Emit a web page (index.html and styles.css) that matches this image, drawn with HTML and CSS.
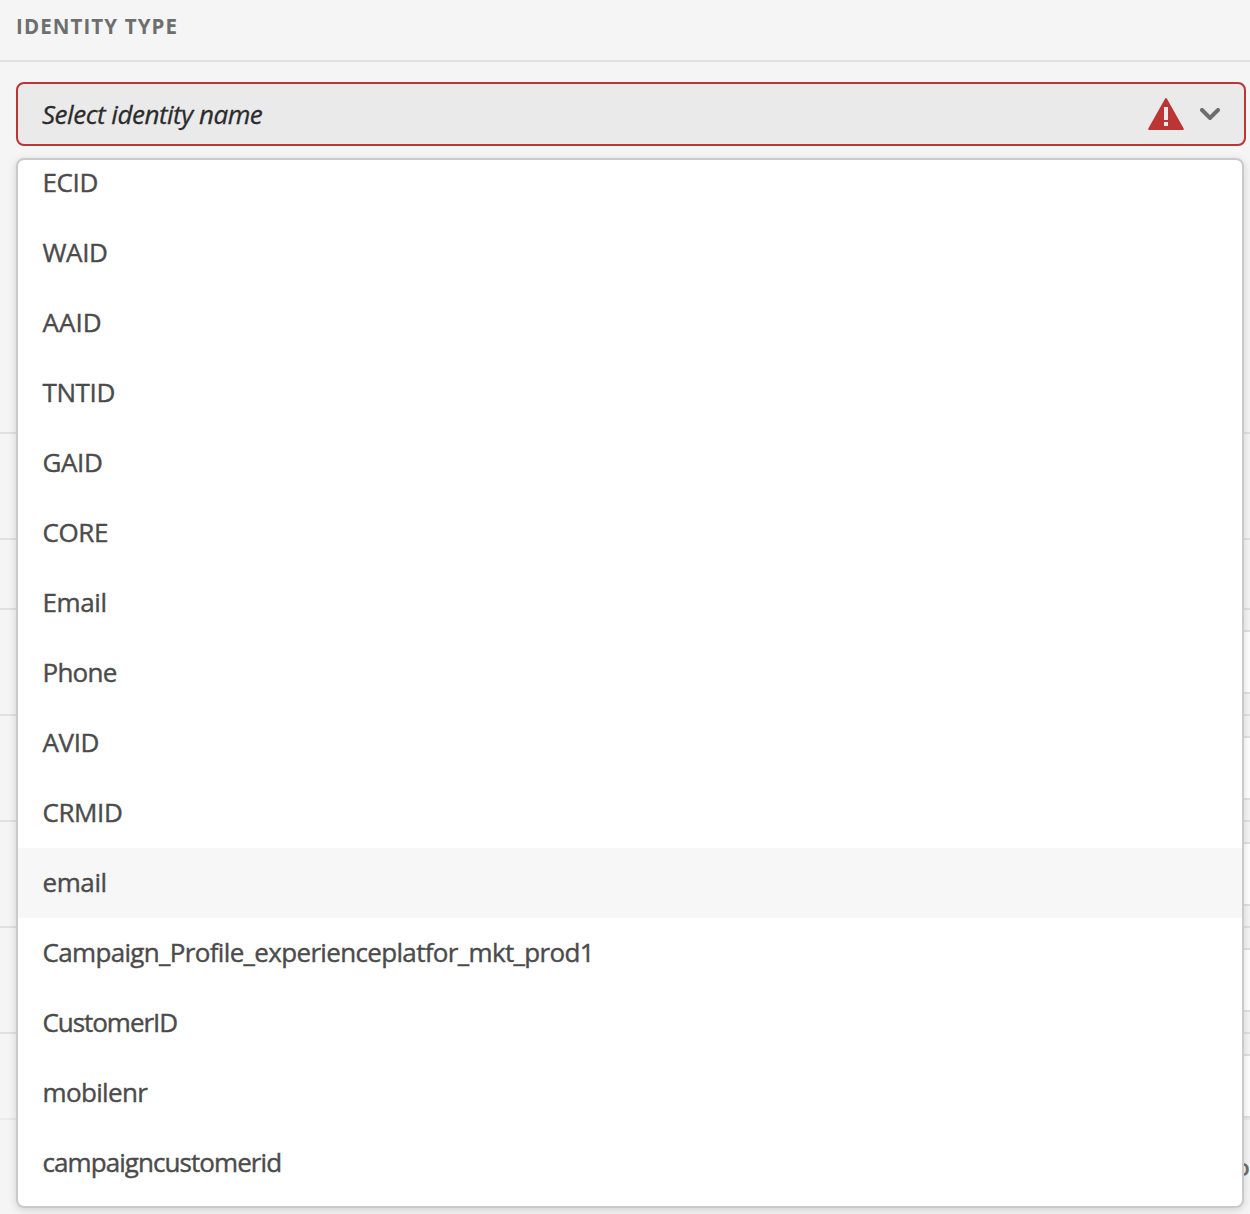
FILE: index.html
```
<!DOCTYPE html>
<html lang="en">
<head>
<meta charset="utf-8">
<title>Identity type</title>
<link rel="stylesheet" href="styles.css">
</head>
<body>
<main class="panel">
  <header class="panel-header">Identity type</header>

  <div class="picker-wrap">
    <button class="picker" type="button">
      <span class="picker-label">Select identity name</span>
      <svg class="icon-alert" viewBox="0 0 36 32" aria-hidden="true">
        <path fill="#bb3534" d="M17.2.6a1 1 0 0 1 1.6 0L35.7 30.5a1 1 0 0 1-.9 1.5H1.2a1 1 0 0 1-.9-1.5z"/>
        <path fill="#eaeaea" d="M16 9h4v13h-4zM16 24h4v4h-4z"/>
      </svg>
      <svg class="icon-chevron" viewBox="0 0 20 12" aria-hidden="true">
        <path d="M2 2l8 8 8-8" fill="none" stroke="#6e6e6e" stroke-width="4" stroke-linecap="round" stroke-linejoin="miter"/>
      </svg>
    </button>
    <ul class="menu">
      <li class="item snug">ECID</li>
      <li class="item snug">WAID</li>
      <li class="item">AAID</li>
      <li class="item snug">TNTID</li>
      <li class="item snug">GAID</li>
      <li class="item snug">CORE</li>
      <li class="item snug">Email</li>
      <li class="item close">Phone</li>
      <li class="item snug">AVID</li>
      <li class="item snug">CRMID</li>
      <li class="item snug is-hovered">email</li>
      <li class="item tight">Campaign_Profile_experienceplatfor_mkt_prod1</li>
      <li class="item tightest">CustomerID</li>
      <li class="item tight">mobilenr</li>
      <li class="item tighter">campaigncustomerid</li>
    </ul>
  </div>

  <div class="rows">
    <div class="row first"></div>
    <div class="row"></div>
    <div class="row short"></div>
    <div class="row"><div class="field"></div></div>
    <div class="row"><div class="field"></div></div>
    <div class="row"><div class="field"></div></div>
    <div class="row"><div class="field"></div></div>
    <div class="row last"><div class="field"></div></div>
  </div>
  <footer class="panel-footer">o</footer>
</main>
</body>
</html>
```
FILE: styles.css
```
* {
  box-sizing: border-box;
}

body {
  margin: 0;
  background: #f5f5f5;
  color: #4b4b4b;
  font-family: "Open Sans", "Noto Sans", sans-serif;
  font-size: 26px;
}

.panel {
  height: 1214px;
  overflow: hidden;
}

.panel-header {
  height: 62px;
  padding: 11px 17px 0 16px;
  border-bottom: 2px solid #e1e1e1;
  color: #6e6e6e;
  font-size: 20.5px;
  line-height: 30px;
  font-weight: 700;
  letter-spacing: 1.1px;
  text-transform: uppercase;
}

.picker-wrap {
  position: relative;
  height: 84px;
  padding: 20px 4px 0 16px;
}

.picker {
  display: flex;
  align-items: center;
  width: 100%;
  height: 64px;
  padding: 0 24px;
  border: 2px solid #bb3534;
  border-radius: 8px;
  background: #eaeaea;
  color: #2c2c2c;
  font: italic 26px "Open Sans", "Noto Sans", sans-serif;
  text-align: left;
}

.picker-label {
  flex: 1;
  letter-spacing: -0.48px;
  -webkit-text-stroke: 0.3px currentColor;
}

.icon-alert {
  width: 36px;
  height: 32px;
  margin-right: 16px;
}

.icon-chevron {
  width: 20px;
  height: 12px;
}

/* The open list lies over the form rows below the picker. */
.menu {
  position: absolute;
  z-index: 1;
  top: 96px;
  left: 16px;
  width: 1228px;
  height: 1050px;
  margin: 0;
  padding: 0;
  overflow: hidden;
  border: 2px solid #cacaca;
  border-radius: 8px;
  background: #fff;
  box-shadow: 0 2px 8px rgba(0, 0, 0, 0.15);
  list-style: none;
}

.item {
  height: 70px;
  padding-left: 24.5px;
  line-height: 69px;
  white-space: nowrap;
  -webkit-text-stroke: 0.4px currentColor;
}

.item:first-child {
  margin-top: -12px;
}

.snug { letter-spacing: -0.4px; }
.close { letter-spacing: -0.75px; }
.tight { letter-spacing: -0.66px; }
.tighter { letter-spacing: -0.93px; }
.tightest { letter-spacing: -1.05px; }

.is-hovered {
  background: #f7f7f7;
}

.row {
  display: flex;
  align-items: center;
  justify-content: flex-end;
  height: 106px;
  border-bottom: 2px solid #e1e1e1;
}

.row.first { height: 288px; }
.row.short { height: 70px; }

.row.last {
  height: 86px;
  padding-top: 20px;
  align-items: flex-start;
  border-bottom-color: #eaeaea;
}

.field {
  width: 600px;
  height: 64px;
  margin-right: -20px;
  border: 2px solid #e1e1e1;
  background: #fff;
}

.panel-footer {
  padding: 30px 0 0;
  color: #6e6e6e;
  font-size: 24px;
  font-weight: 600;
  line-height: 34px;
  text-align: right;
}
```
